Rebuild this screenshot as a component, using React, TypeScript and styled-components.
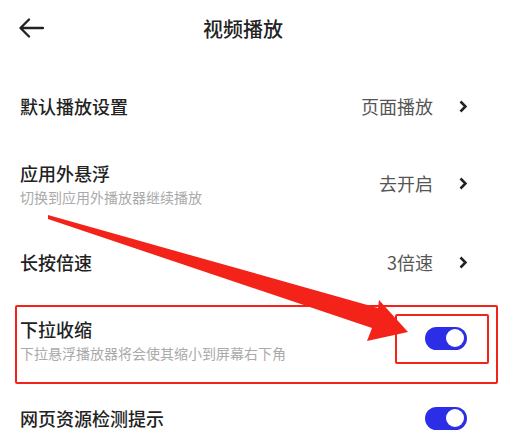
import React from "react";
import styled, { createGlobalStyle } from "styled-components";

const Global = createGlobalStyle`
  html, body { margin: 0; padding: 0; background: #ffffff; }
  body { font-family: "Noto Sans CJK SC", "Noto Sans", sans-serif; }
`;

const Page = styled.div`
  position: relative;
  width: 519px;
  height: 442px;
  overflow: hidden;
  background: #ffffff;
`;

const Header = styled.header`
  height: 56px;
  display: grid;
  grid-template-columns: 60px 1fr 60px;
  align-items: center;
`;

const BackButton = styled.button`
  border: 0;
  background: none;
  padding: 0 0 0 18px;
  display: flex;
  align-items: center;
  height: 100%;
`;

const Title = styled.h1`
  margin: 0;
  text-align: center;
  font-size: 20px;
  font-weight: 500;
  color: #222;
  padding-right: 33px;
`;

const List = styled.div`
  padding-top: 11px;
  display: flex;
  flex-direction: column;
`;

const Row = styled.div`
  height: 78px;
  display: flex;
  align-items: center;
  justify-content: space-between;
  padding: 0 52px 0 20px;
`;

const Texts = styled.div`
  display: flex;
  flex-direction: column;
  gap: 2px;
`;

const Label = styled.div`
  font-size: 18px;
  line-height: 24px;
  font-weight: 500;
  color: #222;
`;

const Sub = styled.div`
  font-size: 14px;
  line-height: 20px;
  color: #aaa;
`;

const Right = styled.div<{ $offset?: number }>`
  display: flex;
  align-items: center;
  gap: 26px;
  margin-top: ${(p) => p.$offset ?? 0}px;
`;

const Value = styled.span`
  font-size: 18px;
  color: #555;
`;

const Toggle = styled.div<{ $offset?: number }>`
  width: 42px;
  height: 23px;
  border-radius: 12px;
  background: #2b2ee6;
  position: relative;
  margin-top: ${(p) => p.$offset ?? 0}px;
  &::after {
    content: "";
    position: absolute;
    right: 3px;
    top: 2.5px;
    width: 18px;
    height: 18px;
    border-radius: 50%;
    background: #fff;
  }
`;

const Box = styled.div<{ $l: number; $t: number; $w: number; $h: number }>`
  position: absolute;
  left: ${(p) => p.$l}px;
  top: ${(p) => p.$t}px;
  width: ${(p) => p.$w}px;
  height: ${(p) => p.$h}px;
  border: 2.5px solid #f4231a;
  border-radius: 2px;
  box-sizing: border-box;
  pointer-events: none;
`;

const Overlay = styled.svg`
  position: absolute;
  left: 0;
  top: 0;
  pointer-events: none;
`;

const Chevron = () => (
  <svg width="8" height="13" viewBox="0 0 8 13">
    <polyline points="1.5,1.5 6.5,6.5 1.5,11.5" fill="none" stroke="#222" strokeWidth="2.6" strokeLinejoin="miter" />
  </svg>
);

const BackIcon = () => (
  <svg width="26" height="20" viewBox="0 0 26 20">
    <path d="M25 10H2.5M11 1.5L2.5 10L11 18.5" fill="none" stroke="#222" strokeWidth="2.3" strokeLinecap="round" strokeLinejoin="round" />
  </svg>
);

export default function App() {
  return (
    <>
      <Global />
      <Page>
        <Header>
          <BackButton>
            <BackIcon />
          </BackButton>
          <Title>视频播放</Title>
          <span />
        </Header>
        <List>
          <Row>
            <Label>默认播放设置</Label>
            <Right>
              <Value>页面播放</Value>
              <Chevron />
            </Right>
          </Row>
          <Row>
            <Texts>
              <Label>应用外悬浮</Label>
              <Sub>切换到应用外播放器继续播放</Sub>
            </Texts>
            <Right $offset={-2}>
              <Value>去开启</Value>
              <Chevron />
            </Right>
          </Row>
          <Row>
            <Label>长按倍速</Label>
            <Right>
              <Value>3倍速</Value>
              <Chevron />
            </Right>
          </Row>
          <Row>
            <Texts>
              <Label>下拉收缩</Label>
              <Sub>下拉悬浮播放器将会使其缩小到屏幕右下角</Sub>
            </Texts>
            <Toggle $offset={-4} />
          </Row>
          <Row>
            <Label>网页资源检测提示</Label>
            <Toggle />
          </Row>
        </List>
        <Box $l={15} $t={305} $w={483} $h={79} />
        <Box $l={395} $t={314} $w={94} $h={50} />
        <Overlay width="519" height="442" viewBox="0 0 519 442">
          <polygon
            points="48,215 378,308 379,300 408,332 367,341 372,328 48,219"
            fill="#f4231a"
          />
        </Overlay>
      </Page>
    </>
  );
}
